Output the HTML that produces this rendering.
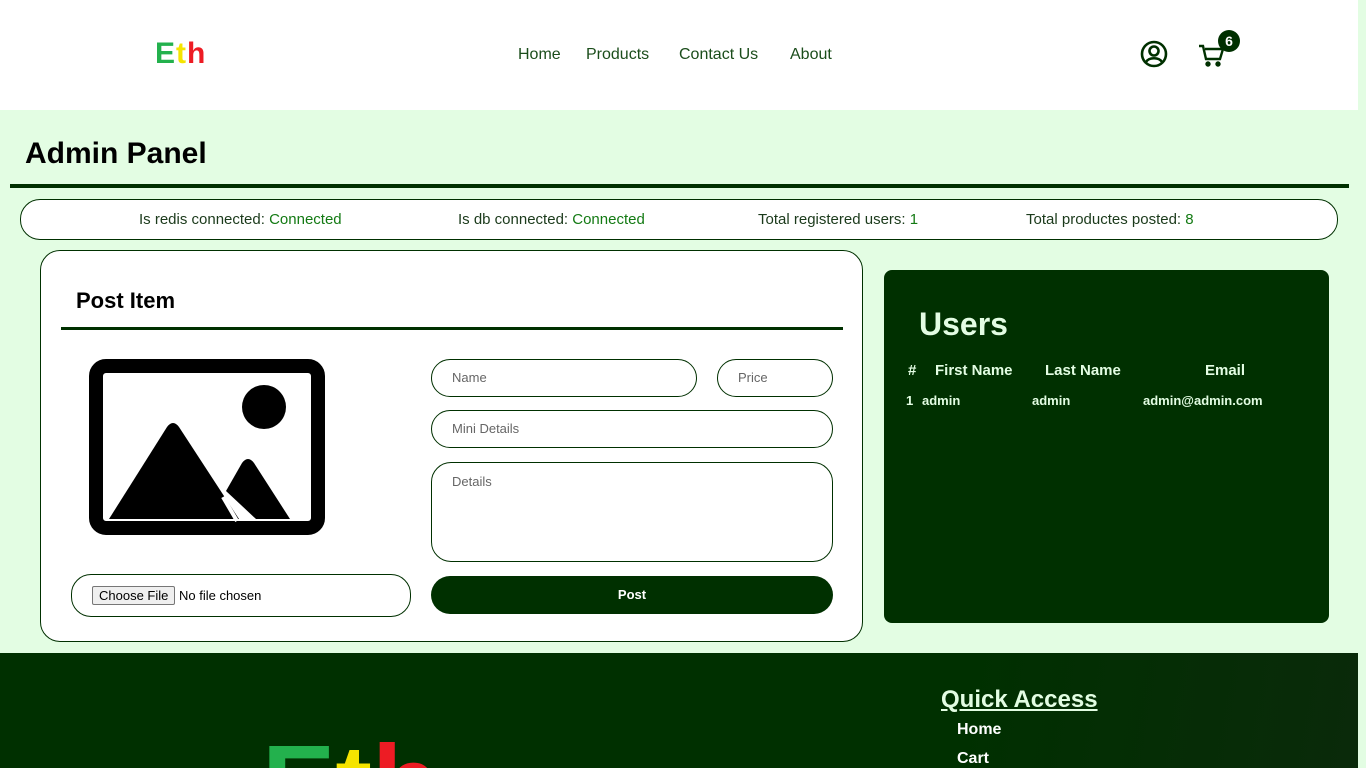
<!DOCTYPE html>
<html style="overflow:hidden;width:1366px;height:768px"><head><meta charset="utf-8"><style>
*{box-sizing:border-box;margin:0;padding:0}
body{width:1366px;height:768px;overflow:hidden;font-family:"Liberation Sans",sans-serif;background:#e3fde3;position:relative}
.abs{position:absolute}
header{position:absolute;left:0;top:0;width:1358px;height:110px;background:#fff}
.logo{position:absolute;left:155px;top:37px;font-size:30px;font-weight:bold;letter-spacing:1px}
.nav a{position:absolute;top:46px;font-size:16px;color:#1b4d1b;text-decoration:none}
.g{color:#23b14d}.y{color:#f5e400}.r{color:#ed1c24}
.status{left:20px;top:199px;width:1318px;height:41px;border:1px solid #003000;border-radius:20px;background:#fff}
.status span{position:absolute;top:11px;font-size:15px;color:#1b3a1b}
.status b{font-weight:normal;color:#137a13}
.card{left:40px;top:250px;width:823px;height:392px;border:1px solid #003000;border-radius:20px;background:#fff}
.inp{position:absolute;border:1px solid #003000;border-radius:20px;background:#fff;font-size:13px;color:#666;padding-left:20px}
.users{left:884px;top:270px;width:445px;height:353px;background:#003000;border-radius:8px;color:#e3fde3}
.users .t{position:absolute;font-size:15px;font-weight:bold}
.users .d{position:absolute;font-size:13px;font-weight:bold}
footer{position:absolute;left:0;top:653px;width:1358px;height:115px;overflow:hidden;background:linear-gradient(100deg,#003000 70%,#0a2a0a 100%)}
</style></head><body>
<header>
<div class="logo"><span class="g">E</span><span class="y">t</span><span class="r">h</span></div>
<div class="nav"><a style="left:518px">Home</a><a style="left:586px">Products</a><a style="left:679px">Contact Us</a><a style="left:790px">About</a></div>
<svg class="abs" style="left:1140px;top:40px" width="28" height="28" viewBox="0 0 28 28" fill="none" stroke="#003000" stroke-width="2.6"><circle cx="14" cy="14" r="12"/><circle cx="14" cy="11" r="4.5"/><path d="M6 22c3-5 13-5 16 0"/></svg>
<svg class="abs" style="left:1198px;top:42px" width="28" height="26" viewBox="0 0 28 26" fill="none" stroke="#003000" stroke-width="2.4"><path d="M1 4h4l3 13h14l3-10H7"/><circle cx="10" cy="22" r="1.5" fill="#003000"/><circle cx="20" cy="22" r="1.5" fill="#003000"/></svg>
<div class="abs" style="left:1218px;top:30px;width:22px;height:22px;border-radius:50%;background:#003000;color:#fff;font-size:14px;font-weight:bold;text-align:center;line-height:22px">6</div>
</header>
<div class="abs" style="left:25px;top:137px;font-size:30px;font-weight:bold;color:#000">Admin Panel</div>
<div class="abs" style="left:10px;top:184px;width:1339px;height:4px;background:#003000"></div>
<div class="abs status">
<span style="left:118px">Is redis connected: <b>Connected</b></span>
<span style="left:437px">Is db connected: <b>Connected</b></span>
<span style="left:737px">Total registered users: <b>1</b></span>
<span style="left:1005px">Total productes posted: <b>8</b></span>
</div>
<div class="abs card">
<div class="abs" style="left:35px;top:37px;font-size:22px;font-weight:bold">Post Item</div>
<div class="abs" style="left:20px;top:76px;width:782px;height:3px;background:#003000"></div>
<svg class="abs" style="left:48px;top:108px" width="236" height="176" viewBox="0 0 236 176"><rect x="7" y="7" width="222" height="162" rx="10" fill="none" stroke="#000" stroke-width="14"/><circle cx="175" cy="48" r="22"/><path d="M20 160L78 68q6-8 12 0l60 92z"/><path d="M137 132l16-28q6-8 12 0l36 56h-34z"/><path d="M148 162l-14-24" stroke="#fff" stroke-width="4"/></svg>
<div class="inp" style="left:30px;top:323px;width:340px;height:43px;color:#000;padding-left:20px;padding-top:11px"><span style="display:inline-block;border:1px solid #767676;background:#efefef;border-radius:2px;padding:1px 6px;font-size:13px">Choose File</span> No file chosen</div>
<div class="inp" style="left:390px;top:108px;width:266px;height:38px;line-height:36px">Name</div>
<div class="inp" style="left:676px;top:108px;width:116px;height:38px;line-height:36px">Price</div>
<div class="inp" style="left:390px;top:159px;width:402px;height:38px;line-height:36px">Mini Details</div>
<div class="inp" style="left:390px;top:211px;width:402px;height:100px;padding-top:11px">Details</div>
<div class="abs" style="left:390px;top:325px;width:402px;height:38px;border-radius:20px;background:#003000;color:#fff;font-size:13px;font-weight:bold;text-align:center;line-height:38px">Post</div>
</div>
<div class="abs users">
<div class="abs" style="left:35px;top:36px;font-size:32px;font-weight:bold">Users</div>
<div class="t" style="left:24px;top:92px">#</div>
<div class="t" style="left:51px;top:92px">First Name</div>
<div class="t" style="left:161px;top:92px">Last Name</div>
<div class="t" style="left:321px;top:92px">Email</div>
<div class="d" style="left:22px;top:123px">1</div>
<div class="d" style="left:38px;top:123px">admin</div>
<div class="d" style="left:148px;top:123px">admin</div>
<div class="d" style="left:259px;top:123px">admin@admin.com</div>
</div>
<footer>
<div class="abs" style="left:941px;top:33px;font-size:24px;font-weight:bold;color:#e3fde3;text-decoration:underline">Quick Access</div>
<div class="abs" style="left:957px;top:68px;font-size:16px;font-weight:bold;color:#fff">Home</div>
<div class="abs" style="left:957px;top:97px;font-size:16px;font-weight:bold;color:#fff">Cart</div>
<div class="abs" style="left:262px;top:77px;font-size:110px;font-weight:bold;line-height:1"><span class="g">E</span><span class="y">t</span><span class="r">h</span></div>
</footer>
</body></html>
